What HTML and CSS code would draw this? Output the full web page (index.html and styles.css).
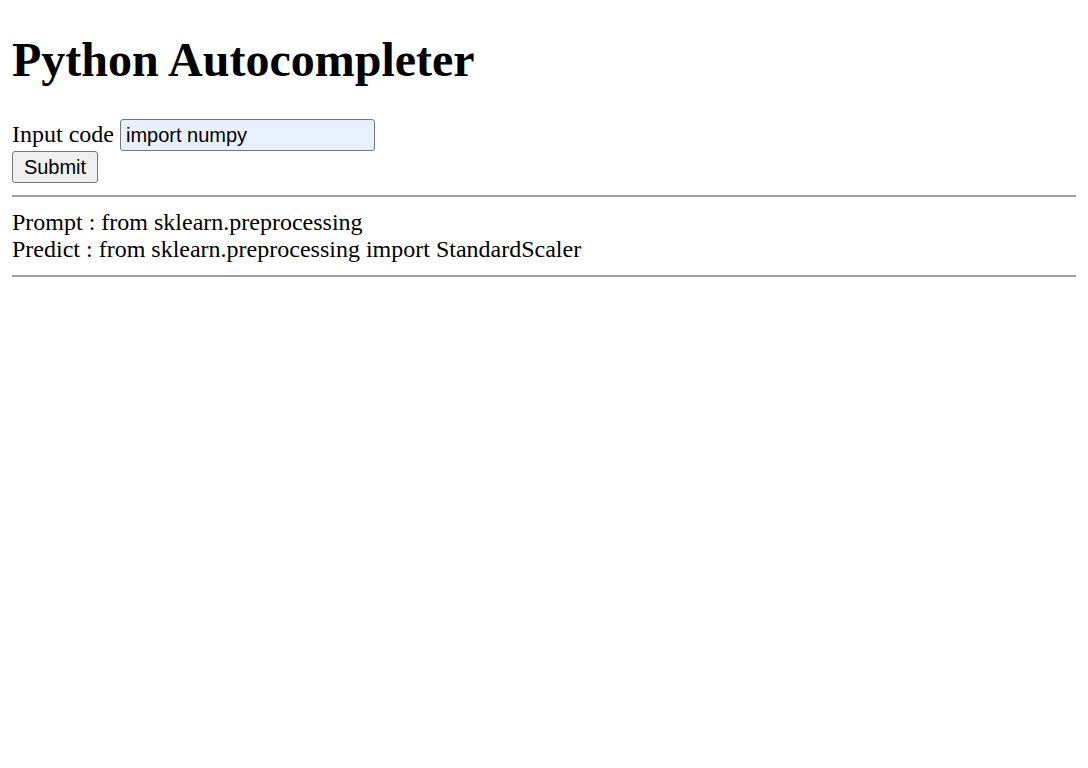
FILE: index.html
```html
<!DOCTYPE html>
<html>
<head>
<meta charset="utf-8">
<title>Python Autocompleter</title>
<link rel="stylesheet" href="styles.css">
</head>
<body>
<h1 class="title">Python Autocompleter</h1>
<form class="form">
<label class="label" for="code">Input code</label> <input class="code-input" id="code" type="text" value="import numpy"><br>
<button class="submit" type="button">Submit</button>
</form>
<hr class="rule">
<div class="result">
<div class="line">Prompt : from sklearn.preprocessing</div>
<div class="line">Predict : from sklearn.preprocessing import StandardScaler</div>
</div>
<hr class="rule">
</body>
</html>
```
FILE: styles.css
```css
html {
  background: #fff;
}
body {
  margin: 12px;
  font-family: "Liberation Serif", "Times New Roman", serif;
  font-size: 24px;
  color: #000;
}
.title {
  font-size: 48px;
  font-weight: bold;
  margin: 20px 0 32px;
}
.form {
  margin: 0;
}
.code-input {
  box-sizing: border-box;
  width: 255px;
  height: 32px;
  padding: 1px 5px;
  border: 1px solid #767676;
  border-radius: 3px;
  background: #e8f0fe;
  font-family: "Liberation Sans", Arial, sans-serif;
  font-size: 20px;
  color: #000;
  vertical-align: baseline;
}
.submit {
  box-sizing: border-box;
  width: 86px;
  height: 32px;
  padding: 1px 9px;
  border: 1px solid #767676;
  border-radius: 3px;
  background: #efefef;
  font-family: "Liberation Sans", Arial, sans-serif;
  font-size: 20px;
  color: #000;
}
.rule {
  margin: 12px 0;
  border: none;
  border-top: 2px solid #a0a0a0;
  height: 0;
}
.result {
  line-height: 27px;
}
```
